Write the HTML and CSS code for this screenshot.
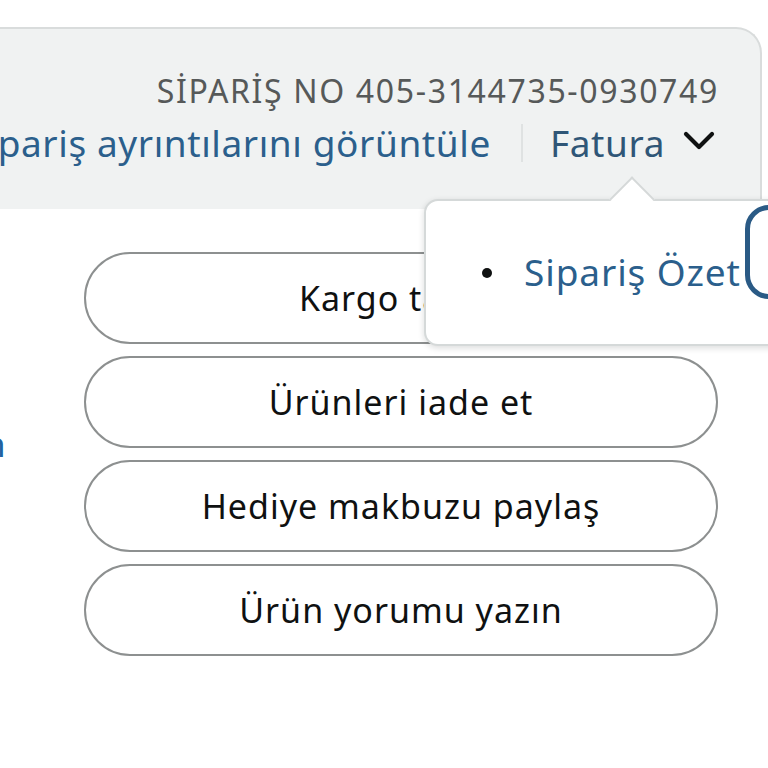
FILE: index.html
```html
<!DOCTYPE html>
<html lang="tr">
<head>
<meta charset="utf-8">
<link rel="stylesheet" href="styles.css">
</head>
<body>
<div class="page">
  <div class="header">
    <div class="order-no">SİPARİŞ NO 405-3144735-0930749</div>
    <div class="links">
      <span class="link details">Sipariş ayrıntılarını görüntüle</span>
      <span class="sep"></span>
      <span class="link fatura">Fatura
        <svg class="chev" width="32" height="20" viewBox="0 0 32 20"><path d="M3 3 L16 16 L29 3" fill="none" stroke="#0f1111" stroke-width="4.2" stroke-linecap="round" stroke-linejoin="round"/></svg>
      </span>
    </div>
  </div>
  <div class="body">
    <div class="side"><span class="side-link">n</span></div>
    <div class="actions">
      <div class="btn">Kargo takibi</div>
      <div class="btn">Ürünleri iade et</div>
      <div class="btn">Hediye makbuzu paylaş</div>
      <div class="btn">Ürün yorumu yazın</div>
    </div>
  </div>
  <div class="popover">
    <div class="arrow"></div>
    <ul class="menu">
      <li><span class="link">Sipariş Özet</span><span class="ring"></span></li>
    </ul>
  </div>
</div>
</body>
</html>
```
FILE: styles.css
```css
html, body {
  margin: 0;
  padding: 0;
  background: #fff;
}
.page {
  position: relative;
  width: 768px;
  height: 768px;
  overflow: hidden;
  font-family: "Noto Sans", "Open Sans", sans-serif;
  color: #0f1111;
}
.header {
  margin-top: 27px;
  width: 762px;
  height: 182px;
  box-sizing: border-box;
  background: #f0f2f2;
  border-top: 2px solid #d9dcdc;
  border-right: 2px solid #d9dcdc;
  border-top-right-radius: 26px;
  padding: 42px 45px 0 0;
  display: flex;
  flex-direction: column;
  align-items: flex-end;
}
.order-no {
  font-size: 32px;
  line-height: 40px;
  color: #565959;
  letter-spacing: 1.65px;
  white-space: nowrap;
  margin-right: -4px;
}
.links {
  margin-top: 10px;
  display: flex;
  align-items: center;
  white-space: nowrap;
}
.link {
  color: #2b5f8c;
}
.details {
  font-size: 37px;
  line-height: 44px;
  letter-spacing: 0.6px;
}
.sep {
  width: 2px;
  height: 38px;
  background: #dfe2e2;
  margin: 0 27px 0 30px;
}
.fatura {
  font-size: 37px;
  line-height: 44px;
  letter-spacing: 0.6px;
  display: flex;
  align-items: center;
  color: #2f5677;
}
.chev {
  margin-left: 18px;
  margin-top: -4px;
}
.body {
  display: flex;
  margin-top: 43px;
}
.side {
  width: 84px;
  position: relative;
}
.side-link {
  position: absolute;
  left: -16px;
  top: 168px;
  font-size: 35px;
  color: #2162a1;
}
.actions {
  width: 634px;
  display: flex;
  flex-direction: column;
  gap: 12px;
}
.btn {
  height: 92px;
  box-sizing: border-box;
  border: 2px solid #8d9090;
  border-radius: 46px;
  display: flex;
  align-items: center;
  justify-content: center;
  font-size: 34px;
  letter-spacing: 1px;
  color: #0f1111;
}
.popover {
  position: absolute;
  left: 424px;
  top: 199px;
  width: 420px;
  height: 147px;
  box-sizing: border-box;
  background: #fff;
  border: 2px solid #d5d9d9;
  border-radius: 14px;
  box-shadow: 0 2px 6px rgba(15, 17, 17, 0.15);
}
.arrow {
  position: absolute;
  left: 190px;
  top: -18px;
  width: 32px;
  height: 32px;
  background: #fff;
  border-top: 2px solid #d5d9d9;
  border-left: 2px solid #d5d9d9;
  transform: rotate(45deg);
  box-sizing: border-box;
}
.menu {
  margin: 0;
  padding: 46px 0 0 98px;
  list-style: none;
  font-size: 37px;
  line-height: 50px;
  letter-spacing: 0.9px;
}
.menu li {
  position: relative;
  white-space: nowrap;
}
.menu li::before {
  content: "";
  position: absolute;
  left: -42px;
  top: 21px;
  width: 10px;
  height: 10px;
  border-radius: 50%;
  background: #0f1111;
}
.ring {
  position: absolute;
  left: 221px;
  top: -42px;
  width: 100px;
  height: 94px;
  border: 5px solid #2a5a85;
  border-radius: 24px;
  box-sizing: border-box;
  background: #fff;
}
```
